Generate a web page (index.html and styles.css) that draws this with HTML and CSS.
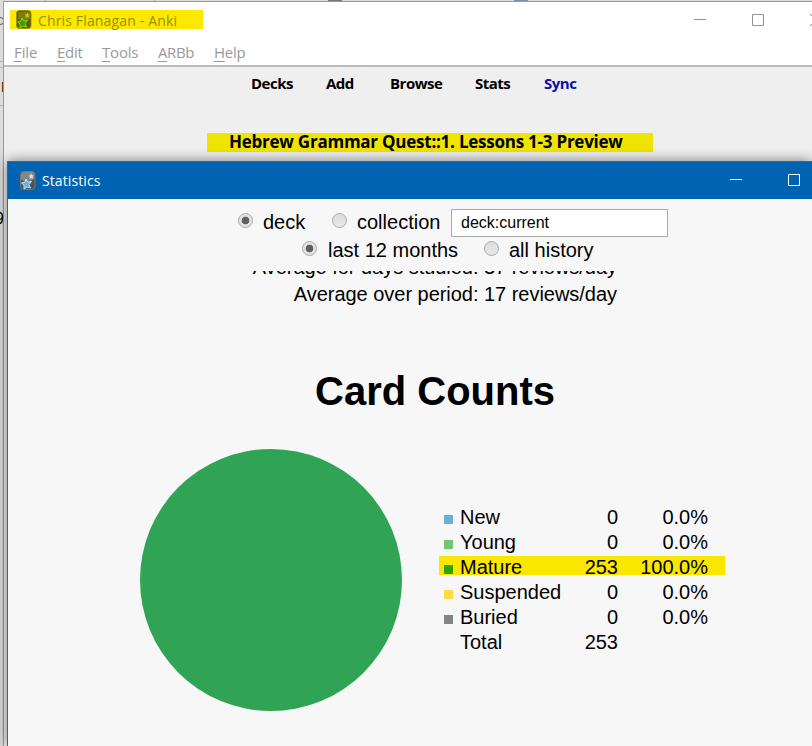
FILE: index.html
```html
<!DOCTYPE html>
<html lang="en">
<head>
<meta charset="utf-8">
<title>Anki Statistics</title>
<link rel="stylesheet" href="styles.css">
</head>
<body>
<div class="desktop">
  <i class="seam seam-a"></i><i class="seam seam-b"></i><i class="seam seam-c"></i><i class="tick tick-a"></i><i class="tick tick-b"></i><i class="tick tick-c"></i><i class="tick tick-d"></i>
  <span class="peek peek-c">c</span><span class="peek peek-d">D</span><span class="peek peek-9">9</span>
  <section class="window main">
    <header class="main-title">
      <div class="caption">
        <svg class="app-icon" viewBox="0 0 16 19"><rect x=".5" y=".5" width="14.500" height="18" rx="3" fill="#5c5c06" stroke="#9b9100"/><path d="M2 4q0-2 2-2h8q2 0 2 2v5Q9 12 2 9z" fill="#817c0b"/><path d="m6 8 1.500 3 4-.5-2.500 3 1.500 3.500-3.500-1-3 2v-4l-2.500-2 3.500-1z" fill="#2ca500" stroke="#a8d800" stroke-width=".9"/><path d="m11.500 2.500.7 1.700 1.800.3-1.200 1.300.2 2-1.700-.9-1.800.9.3-2-1.300-1.300 1.900-.3z" fill="#b6d500"/></svg>
        <span class="caption-text">Chris Flanagan - Anki</span>
      </div>
      <svg class="controls" viewBox="0 0 118 14"><path d="M0 7.5h12M58.500 2.500h11v11h-11zM116 2l12 12M128 2l-12 12" fill="none" stroke="#929292"/></svg>
    </header>
    <nav class="menu"><span class="m1"><u>F</u>ile</span><span class="m2"><u>E</u>dit</span><span class="m3"><u>T</u>ools</span><span class="m4"><u>A</u>RBb</span><span class="m5"><u>H</u>elp</span></nav>
    <div class="main-body">
      <nav class="toolbar"><b class="t1">Decks</b><b class="t2">Add</b><b class="t3">Browse</b><b class="t4">Stats</b><b class="t5">Sync</b></nav>
      <h2 class="deck-name"><span>Hebrew Grammar Quest::1. Lessons 1-3 Preview</span></h2>
    </div>
  </section>
  <section class="window stats">
    <header class="stats-title">
      <svg class="app-icon" viewBox="0 0 16 19"><rect x=".5" y=".5" width="14.500" height="18" rx="3" fill="#505050" stroke="#777"/><path d="M1 3Q1 1 3 1h9.500q2 0 2 2v5Q9 12 1 9z" fill="#858585"/><path d="m6 8 1.500 3 4-.5-2.500 3 1.500 3.500-3.500-1-3 2v-4l-2.500-2 3.500-1z" fill="#55b5f0" stroke="#dcecf5" stroke-width=".9"/><path d="m11.500 2.500.7 1.700 1.800.3-1.200 1.300.2 2-1.700-.9-1.800.9.3-2-1.300-1.300 1.900-.3z" fill="#c8e6f6"/></svg>
      <span class="stats-caption">Statistics</span>
      <svg class="controls" viewBox="0 0 82 14"><path d="M0 7.500h12M58.500 2.500h11v11h-11z" fill="none" stroke="#fff"/></svg>
    </header>
    <div class="filters">
      <div class="filter-row first"><i class="radio on"></i><label class="deck">deck</label><i class="radio"></i><label class="collection">collection</label><div class="search">deck:current</div></div>
      <div class="filter-row second"><i class="radio on"></i><label class="months">last 12 months</label><i class="radio"></i><label>all history</label></div>
    </div>
    <div class="averages"><p>Average for days studied: 37 reviews/day</p><p>Average over period: 17 reviews/day</p></div>
    <h1>Card Counts</h1>
    <div class="counts">
      <div class="pie"></div>
      <div class="legend">
        <div class="entry"><i class="new"></i><span>New</span><span>0</span><span>0.0%</span></div>
        <div class="entry"><i class="young"></i><span>Young</span><span>0</span><span>0.0%</span></div>
        <div class="entry marked"><i class="mature"></i><span>Mature</span><span>253</span><span>100.0%</span></div>
        <div class="entry"><i class="suspended"></i><span>Suspended</span><span>0</span><span>0.0%</span></div>
        <div class="entry"><i class="buried"></i><span>Buried</span><span>0</span><span>0.0%</span></div>
        <div class="entry"><i></i><span>Total</span><span>253</span><span></span></div>
      </div>
    </div>
  </section>
</div>
</body>
</html>
```
FILE: styles.css
```css
* { box-sizing: border-box; }
body { margin: 0; font-family: "Liberation Sans", Arial, sans-serif; color: #000; }
.desktop { position: relative; width: 812px; height: 746px; overflow: hidden; background: #dcdcdc; }
.window { position: absolute; right: 0; bottom: 0; white-space: nowrap; }
.peek { position: absolute; left: 0; width: 4px; overflow: hidden; direction: rtl; line-height: 18px; font-size: 15px; }
.peek-c { top: 11px; color: #806a5a; }
.peek-d { top: 78px; left: 1px; direction: ltr; }
.peek-9 { top: 210px; font-size: 16px; }
.seam { position: absolute; left: 0; width: 4px; height: 1px; background: #b9b9b9; }
.seam-a { top: 61px; }
.seam-b { top: 67px; }
.seam-c { top: 105px; }
.tick { position: absolute; top: 0; width: 1px; height: 1px; background: #aaa; }
.tick-a { left: 45px; }
.tick-b { left: 154px; }
.tick-c { left: 328px; width: 14px; background: #777; }
.tick-d { left: 514px; width: 14px; background: #7890b8; }

.main { left: 3px; top: 1px; border-left: 1px solid #999; border-top: 1px solid #999; background: #fff; font-family: "Open Sans", "Noto Sans", sans-serif; }
.main-title { height: 38px; padding: 8px 0 0 6px; display: flex; justify-content: space-between; }
.caption { display: flex; align-items: center; width: 193px; height: 19px; padding-left: 6px; background: #ffe800; color: #969000; }
.app-icon { width: 16px; height: 19px; flex: none; }
.caption-text { margin: 1px 0 0 6px; font-size: 14px; letter-spacing: .15px; }
.main .controls { width: 118px; height: 14px; margin-top: 2px; flex: none; }
.menu { display: flex; height: 25px; padding-left: 10px; font-size: 15px; line-height: 25px; color: #999; }
.menu u { text-decoration-thickness: 1px; text-underline-offset: 3px; }
.m1 { width: 43px; letter-spacing: -.1px; }
.m2 { width: 45px; letter-spacing: -.3px; }
.m3 { width: 56px; letter-spacing: -.2px; }
.m4 { width: 56px; letter-spacing: -.4px; }
.m5 { letter-spacing: -.3px; }
.main-body { height: 681px; border-top: 2px solid #bdbdbd; background: #efefef; }
.toolbar { display: flex; height: 66px; padding: 6px 0 0 247px; font-size: 15px; line-height: 20px; letter-spacing: -.5px; }
.t1 { width: 75px; }
.t2 { width: 64px; }
.t3 { width: 85px; }
.t4 { width: 69px; }
.t5 { color: #1010aa; }
.deck-name { display: flex; margin: 0 0 0 203px; padding-left: 22px; width: 446px; height: 19px; background: #f0e500; font-size: 17px; line-height: 18px; letter-spacing: -.24px; }

.stats { left: 7px; top: 161px; border-left: 1px solid #1670b5; background: #f7f7f7; box-shadow: 0 0 12px rgba(0,0,0,.5); font-size: 20px; }
.stats-title { display: flex; align-items: center; height: 38px; padding-left: 12px; background: #0063b1; border-top: 1px solid #1670b5; color: #fff; font-family: "Open Sans", "Noto Sans", sans-serif; }
.stats-caption { margin-left: 6px; font-size: 14px; letter-spacing: .1px; }
.stats .controls { width: 82px; height: 14px; margin-left: auto; margin-top: -3px; }
.filters { height: 72px; padding-top: 10px; }
.filter-row { display: flex; align-items: center; height: 28px; }
.first { padding-left: 230px; }
.second { padding-left: 294px; }
.radio { width: 15px; height: 15px; flex: none; margin-top: -5px; border: 1px solid #aaa; border-radius: 50%; background: linear-gradient(#ddd, #e8e8e8); }
.on { background: radial-gradient(circle, #606060 0 3.5px, #e3e3e3 4.2px); }
.filter-row label { margin: -2px 0 0 10px; line-height: 24px; }
.deck { width: 69px; }
.collection { width: 94px; }
.filter-row .months { width: 156px; margin-left: 11px; }
.search { width: 217px; height: 28px; padding-left: 9px; border: 1px solid #a9a9a9; background: #fff; font-size: 16px; line-height: 26px; }
.averages { display: flex; flex-direction: column; justify-content: flex-end; height: 37px; width: 609px; overflow: hidden; text-align: right; }
.averages p { flex: none; height: 27px; margin: 0; line-height: 27px; letter-spacing: -.03px; }
h1 { width: 854px; height: 46px; margin: 60px 0 0; font-size: 40px; line-height: 46px; text-align: center; }
.counts { display: flex; padding-left: 132px; margin-top: 35px; }
.pie { width: 262px; height: 262px; border-radius: 50%; background: #31a354; }
.legend { margin: 56px 0 0 37px; width: 286px; }
.entry { display: grid; grid-template-columns: 16px 101px 57px 90px; height: 25px; padding-left: 5px; line-height: 25px; }
.entry span:nth-of-type(n+2) { text-align: right; }
.entry i { width: 9px; height: 9px; margin-top: 10px; }
.marked { background: linear-gradient(#f9e700, #f9e700) 0 1px / 286px 19px no-repeat; }
.new { background: #6baed6; }
.young { background: #74c476; }
.mature { background: #31a300; }
.suspended { background: #ffdc41; }
.buried { background: #848484; }
```
